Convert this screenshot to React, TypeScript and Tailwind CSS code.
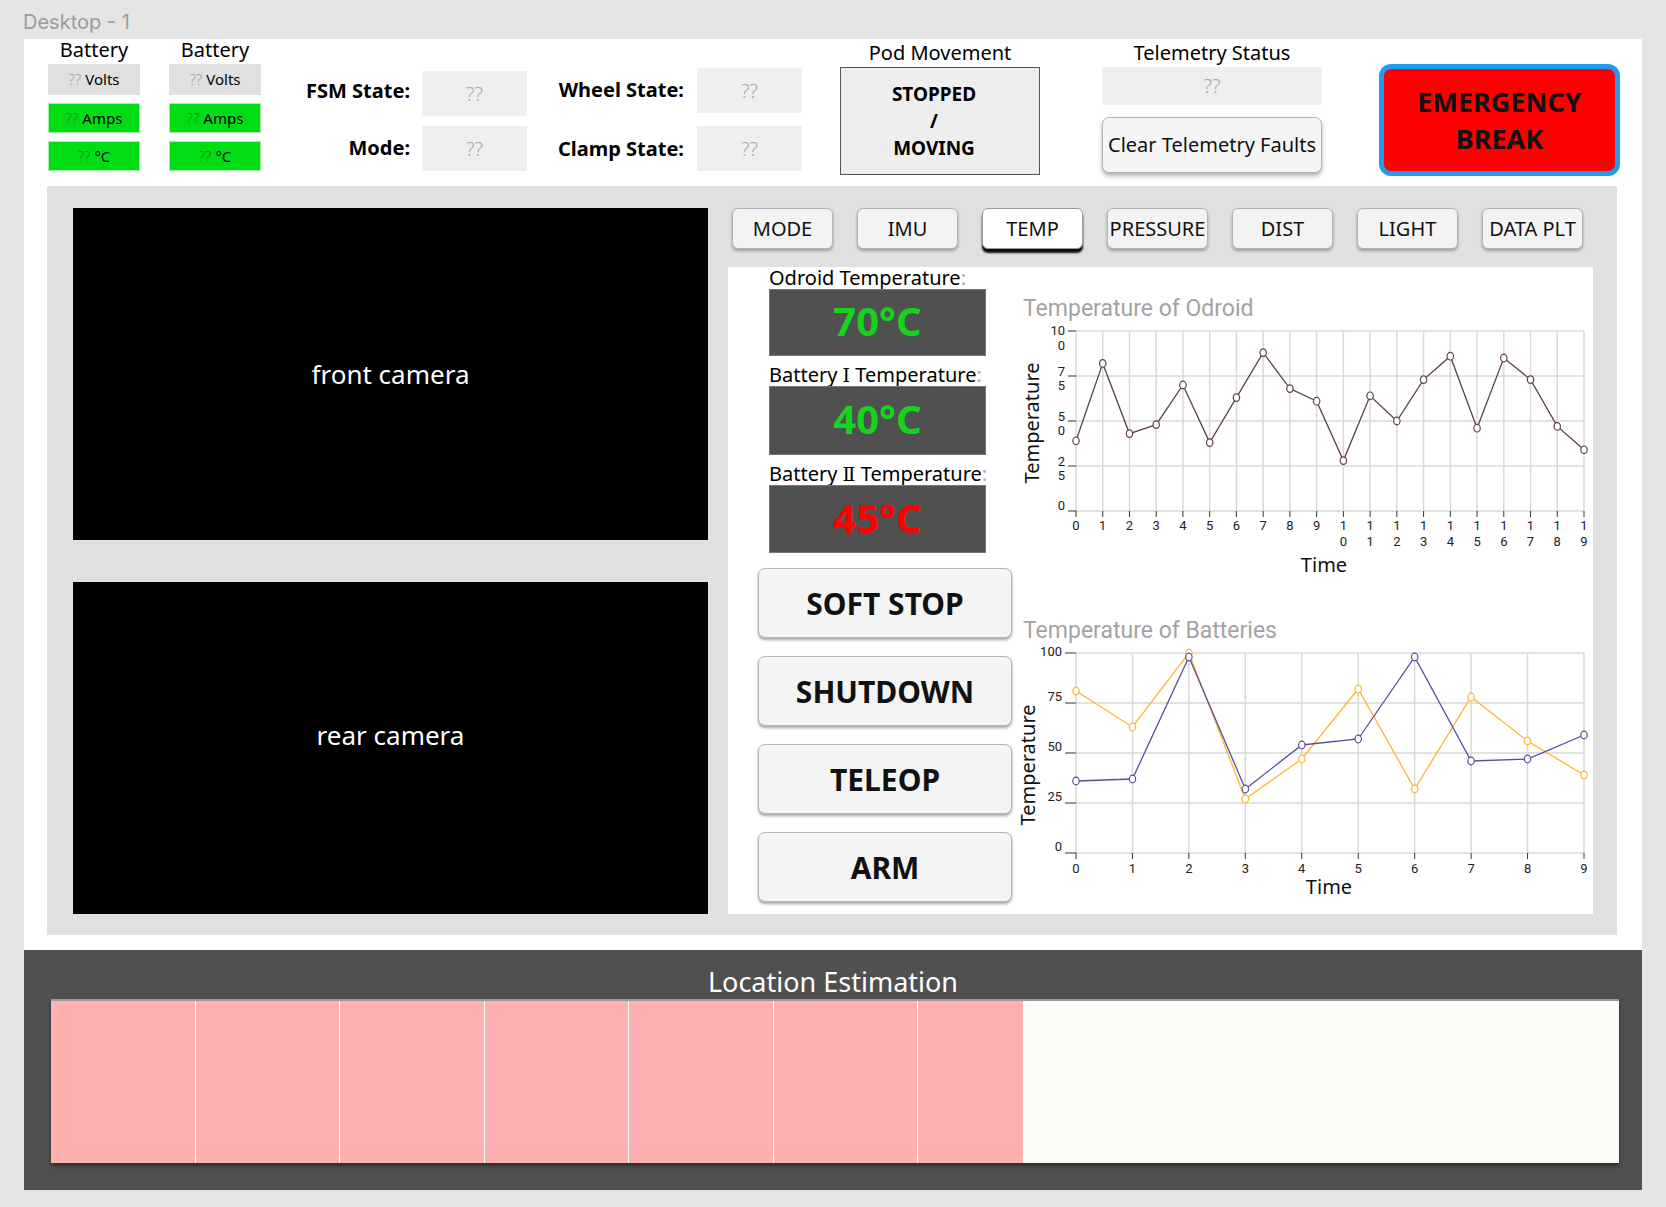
import React from 'react';

// chart data read off the mockup
const odroid = [39, 82, 43, 48, 70, 38, 63, 88, 68, 61, 28, 64, 50, 73, 86, 46, 85, 73, 47, 34];
const battOne = [81, 63, 100, 27, 47, 82, 32, 78, 56, 39];
const battTwo = [36, 37, 98, 32, 54, 57, 98, 46, 47, 59];

const PL = 66;
const PR = 574;
const GRID = '#d9d9d9';

type YLabel = { v: number; lines: string[]; ys: number[] };

function Chart({
  data,
  height,
  top,
  bottom,
  yLabels,
  labelRight,
  xLabelY,
  timeX,
  timeY,
  tempX,
  tempY,
}: {
  data: { color: string; values: number[] }[];
  height: number;
  top: number;
  bottom: number;
  yLabels: YLabel[];
  labelRight: number;
  xLabelY: number;
  timeX: number;
  timeY: number;
  tempX: number;
  tempY: number;
}) {
  const n = data[0].values.length;
  const step = (PR - PL) / (n - 1);
  const x = (i: number) => PL + i * step;
  const y = (v: number) => bottom - ((bottom - top) * v) / 100;

  return (
    <svg width={583} height={height} className="block">
      {data[0].values.map((_, i) => (
        <line key={'v' + i} x1={x(i)} x2={x(i)} y1={top} y2={bottom} stroke={GRID} strokeWidth={1.5} />
      ))}
      {[100, 75, 50, 25, 0].map((v) => (
        <line key={'h' + v} x1={PL} x2={PR} y1={y(v)} y2={y(v)} stroke={GRID} strokeWidth={1.5} />
      ))}
      {[100, 75, 50, 25, 0].map((v) => (
        <line key={'t' + v} x1={labelRight + 3} x2={PL} y1={y(v)} y2={y(v)} stroke="#333" strokeWidth={1} />
      ))}
      {data[0].values.map((_, i) => (
        <line key={'xt' + i} x1={x(i)} x2={x(i)} y1={bottom} y2={bottom + 6} stroke="#333" strokeWidth={1} />
      ))}

      {data.map((s, k) => (
        <g key={k}>
          <polyline
            points={s.values.map((v, i) => `${x(i)},${y(v)}`).join(' ')}
            fill="none"
            stroke={s.color}
            strokeWidth={1.3}
          />
          {s.values.map((v, i) => (
            <ellipse key={i} cx={x(i)} cy={y(v)} rx={3.2} ry={3.8} fill="#fff" stroke={s.color} strokeWidth={1.2} />
          ))}
        </g>
      ))}

      <g className="font-['Roboto',sans-serif]" fontSize={13} fill="#222">
        {yLabels.map((l) =>
          l.lines.map((t, j) => (
            <text key={l.v + '-' + j} x={labelRight} y={l.ys[j]} textAnchor="end" dominantBaseline="central">
              {t}
            </text>
          ))
        )}
        {data[0].values.map((_, i) =>
          i < 10 ? (
            <text key={'xl' + i} x={x(i)} y={xLabelY} textAnchor="middle" dominantBaseline="central">
              {i}
            </text>
          ) : (
            <g key={'xl' + i}>
              <text x={x(i)} y={xLabelY} textAnchor="middle" dominantBaseline="central">
                1
              </text>
              <text x={x(i)} y={xLabelY + 16} textAnchor="middle" dominantBaseline="central">
                {i - 10}
              </text>
            </g>
          )
        )}
      </g>

      <g className="font-['Noto_Sans',sans-serif]" fontSize={20} fill="#111">
        <text x={timeX} y={timeY} textAnchor="middle" dominantBaseline="central">
          Time
        </text>
        <text
          x={tempX}
          y={tempY}
          textAnchor="middle"
          dominantBaseline="central"
          transform={`rotate(-90 ${tempX} ${tempY})`}
        >
          Temperature
        </text>
      </g>
    </svg>
  );
}

function BatteryCol() {
  return (
    <div className="flex w-[92px] flex-col">
      <div className="h-[25px] text-center text-[20px] leading-[21px] text-black">Battery</div>
      <div className="flex flex-col gap-[8px]">
        <div className="flex h-[31px] items-center justify-center bg-[#e0e0e0] text-[15px] text-black">
          <span className="mr-[4px] font-light text-[#a0a0a0]">??</span>Volts
        </div>
        <div className="flex h-[30px] items-center justify-center border border-[#a8eea8] bg-[#00dd15] text-[15px] text-black">
          <span className="mr-[4px] font-light text-[#1a8a1a]">??</span>Amps
        </div>
        <div className="flex h-[30px] items-center justify-center border border-[#a8eea8] bg-[#00dd15] text-[15px] text-black">
          <span className="mr-[4px] font-light text-[#1a8a1a]">??</span>°C
        </div>
      </div>
    </div>
  );
}

function StateBox() {
  return (
    <div className="flex h-[45px] w-[105px] items-center justify-center bg-[#efefef] text-[20px] font-light text-[#aaaaaa]">
      ??
    </div>
  );
}

function Tab({ label, active }: { label: string; active?: boolean }) {
  return (
    <div
      className={
        active
          ? 'flex h-[41px] w-[101px] items-center justify-center rounded-[6px] border border-[#9a9a9a] bg-white text-[20px] text-[#111] shadow-[0_4px_2px_rgba(0,0,0,0.95)]'
          : 'flex h-[41px] w-[101px] items-center justify-center rounded-[6px] border border-[#b4b4b4] bg-[#f3f3f3] text-[20px] text-[#111] shadow-[0_2px_3px_rgba(0,0,0,0.3)]'
      }
    >
      {label}
    </div>
  );
}

function TempReading({
  name,
  numeral,
  value,
  hot,
  boxH,
}: {
  name: string;
  numeral?: string;
  value: string;
  hot?: boolean;
  boxH: string;
}) {
  return (
    <div className="flex flex-col">
      <div className="h-[22px] whitespace-nowrap text-[20px] leading-[22px] text-black">
        {name}
        {numeral && (
          <>
            {' '}
            <span className="font-['DejaVu_Serif',serif] text-[19px]">{numeral}</span>
          </>
        )}{' '}
        Temperature
        <span className="text-[#aaaaaa]">:</span>
      </div>
      <div
        className={
          'flex w-[217px] items-center justify-center border border-[#777] bg-[#505050] pb-[3px] text-[40px] font-bold ' +
          boxH +
          (hot ? ' text-[#ff0000]' : ' text-[#14d41e]')
        }
      >
        {value}
      </div>
    </div>
  );
}

function BigButton({ label }: { label: string }) {
  return (
    <div className="flex h-[70px] w-[254px] items-center justify-center rounded-[7px] border border-[#b4b4b4] bg-[#f4f4f4] text-[30px] font-bold text-[#111] shadow-[0_2px_3px_rgba(0,0,0,0.35)]">
      {label}
    </div>
  );
}

export default function App() {
  return (
    <div className="h-[1207px] w-[1666px] bg-[#e5e5e5] font-['Noto_Sans',sans-serif]">
      <div className="h-[39px] pl-[23px] pt-[10px] font-['Inter',sans-serif] text-[20px] leading-[24px] text-[#9c9c9c]">
        Desktop - 1
      </div>

      <div className="ml-[24px] h-[1151px] w-[1618px] bg-white">
        {/* header */}
        <div className="flex h-[147px] items-start">
          <div className="ml-[24px]">
            <BatteryCol />
          </div>
          <div className="ml-[29px]">
            <BatteryCol />
          </div>

          <div className="flex flex-col gap-[10px] pt-[32px]">
            <div className="flex items-center">
              <div className="w-[149px] pb-[6px] text-right text-[20px] font-bold">FSM State:</div>
              <div className="ml-[12px]">
                <StateBox />
              </div>
            </div>
            <div className="flex items-center">
              <div className="w-[149px] pb-[2px] text-right text-[20px] font-bold">Mode:</div>
              <div className="ml-[12px]">
                <StateBox />
              </div>
            </div>
          </div>

          <div className="flex flex-col gap-[13px] pt-[29px]">
            <div className="flex items-center">
              <div className="w-[157px] pb-[2px] text-right text-[20px] font-bold">Wheel State:</div>
              <div className="ml-[13px]">
                <StateBox />
              </div>
            </div>
            <div className="flex items-center">
              <div className="w-[157px] text-right text-[20px] font-bold">Clamp State:</div>
              <div className="ml-[13px]">
                <StateBox />
              </div>
            </div>
          </div>

          <div className="ml-[38px] flex w-[200px] flex-col">
            <div className="h-[28px] text-center text-[20px] leading-[28px]">Pod Movement</div>
            <div className="flex h-[108px] flex-col items-center justify-center border border-[#555] bg-[#eeeeee] pr-[12px] text-[19px] font-bold leading-[27px] text-black">
              <span>STOPPED</span>
              <span>/</span>
              <span>MOVING</span>
            </div>
          </div>

          <div className="ml-[62px] flex w-[220px] flex-col">
            <div className="h-[28px] text-center text-[20px] leading-[28px]">Telemetry Status</div>
            <div className="flex h-[38px] items-center justify-center bg-[#efefef] text-[20px] font-light text-[#aaaaaa]">
              ??
            </div>
            <div className="mt-[12px] flex h-[56px] items-center justify-center whitespace-nowrap rounded-[7px] border border-[#b4b4b4] bg-[#f5f5f5] text-[20px] text-[#111] shadow-[0_3px_4px_rgba(0,0,0,0.3)]">
              Clear Telemetry Faults
            </div>
          </div>

          <div className="ml-[57px] mt-[25px] flex h-[112px] w-[241px] flex-col items-center justify-center rounded-[12px] border-[5px] border-[#1f9cf0] bg-[#ff0000] text-[27px] font-bold leading-[37px] text-[#111]">
            <span>EMERGENCY</span>
            <span>BREAK</span>
          </div>
        </div>

        {/* main gray panel */}
        <div className="ml-[23px] flex h-[749px] w-[1570px] bg-[#e0e0e0]">
          <div className="ml-[26px] flex flex-col gap-[42px] pt-[22px]">
            <div className="flex h-[332px] w-[635px] items-center justify-center bg-black text-[26px] text-white">
              front camera
            </div>
            <div className="flex h-[332px] w-[635px] items-center justify-center bg-black pb-[26px] text-[26px] text-white">
              rear camera
            </div>
          </div>

          <div className="ml-[20px] flex flex-col pt-[22px]">
            <div className="ml-[4px] flex gap-[24px]">
              <Tab label="MODE" />
              <Tab label="IMU" />
              <Tab label="TEMP" active />
              <Tab label="PRESSURE" />
              <Tab label="DIST" />
              <Tab label="LIGHT" />
              <Tab label="DATA PLT" />
            </div>

            <div className="mt-[18px] flex h-[647px] w-[865px] bg-white">
              <div className="flex w-[282px] flex-col">
                <div className="ml-[41px] flex flex-col gap-[8px]">
                  <TempReading name="Odroid" value="70°C" boxH="h-[67px]" />
                  <TempReading name="Battery" numeral="Ⅰ" value="40°C" boxH="h-[69px]" />
                  <TempReading name="Battery" numeral="Ⅱ" value="45°C" hot boxH="h-[68px]" />
                </div>
                <div className="ml-[30px] mt-[15px] flex flex-col gap-[18px]">
                  <BigButton label="SOFT STOP" />
                  <BigButton label="SHUTDOWN" />
                  <BigButton label="TELEOP" />
                  <BigButton label="ARM" />
                </div>
              </div>

              <div className="flex w-[583px] flex-col pt-[29px]">
                <div className="h-[26px] pl-[13px] font-['Roboto',sans-serif] text-[23px] leading-[26px] text-[#a3a3a3]">
                  Temperature of Odroid
                </div>
                <Chart
                  data={[{ color: '#5d3e4c', values: odroid }]}
                  height={296}
                  top={9}
                  bottom={189}
                  yLabels={[
                    { v: 100, lines: ['10', '0'], ys: [8.7, 23] },
                    { v: 75, lines: ['7', '5'], ys: [49.7, 63.7] },
                    { v: 50, lines: ['5', '0'], ys: [94.7, 108.7] },
                    { v: 25, lines: ['2', '5'], ys: [139, 153] },
                    { v: 0, lines: ['0'], ys: [183] },
                  ]}
                  labelRight={55}
                  xLabelY={203}
                  timeX={314}
                  timeY={242}
                  tempX={21}
                  tempY={101}
                />
                <div className="h-[26px] pl-[13px] font-['Roboto',sans-serif] text-[23px] leading-[26px] text-[#a3a3a3]">
                  Temperature of Batteries
                </div>
                <Chart
                  data={[
                    { color: '#ffb52e', values: battOne },
                    { color: '#594c9c', values: battTwo },
                  ]}
                  height={260}
                  top={9}
                  bottom={209}
                  yLabels={[
                    { v: 100, lines: ['100'], ys: [7.7] },
                    { v: 75, lines: ['75'], ys: [52.7] },
                    { v: 50, lines: ['50'], ys: [102.7] },
                    { v: 25, lines: ['25'], ys: [152.7] },
                    { v: 0, lines: ['0'], ys: [202.7] },
                  ]}
                  labelRight={52}
                  xLabelY={224}
                  timeX={319}
                  timeY={242}
                  tempX={17}
                  tempY={121}
                />
              </div>
            </div>
          </div>
        </div>

        {/* location estimation */}
        <div className="mt-[15px] h-[240px] w-[1618px] bg-[#505050] pt-[15px]">
          <div className="h-[34px] text-center text-[27px] leading-[34px] text-white">Location Estimation</div>
          <div className="ml-[27px] flex h-[164px] w-[1568px] border-t-2 border-[#9a9a9a] bg-[#fdfcf9] shadow-[0_3px_4px_rgba(0,0,0,0.45)]">
            {[0, 1, 2, 3, 4, 5].map((i) => (
              <div key={i} className="h-full w-[144.5px] border-r border-white bg-[#ffb0b0]" />
            ))}
            <div className="h-full w-[105px] bg-[#ffb0b0]" />
          </div>
        </div>
      </div>
    </div>
  );
}
